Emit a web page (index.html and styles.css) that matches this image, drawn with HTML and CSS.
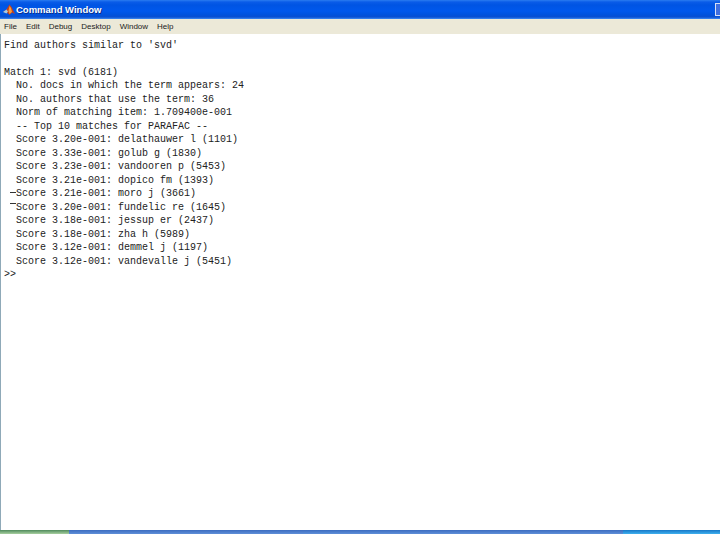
FILE: index.html
```html
<!DOCTYPE html>
<html lang="en">
<head>
<meta charset="utf-8">
<title>Command Window</title>
<link rel="stylesheet" href="styles.css">
</head>
<body>
<div class="window">
  <header class="titlebar">
    <svg class="app-icon" width="12" height="12" viewBox="0 0 12 12" aria-hidden="true">
      <path d="M0 8 L3.5 5.5 L6.5 0.5 L8.5 3 L12 10 L9 8.5 L6.5 11 L4 8.5 Z" fill="#c8401a"/>
      <path d="M0 8 L3.5 5.5 L5 7.5 L3.5 9.5 Z" fill="#a9cbe0"/>
      <path d="M6.5 2 L8 4 L9 8 L6.5 10 L5.5 7 Z" fill="#f0a040"/>
    </svg>
    <span class="title">Command Window</span>
    <span class="win-btn"></span>
  </header>
  <nav class="menubar">
    <span class="menu-item">File</span>
    <span class="menu-item">Edit</span>
    <span class="menu-item">Debug</span>
    <span class="menu-item">Desktop</span>
    <span class="menu-item">Window</span>
    <span class="menu-item">Help</span>
  </nav>
  <main class="console">
    <pre class="output">Find authors similar to 'svd'

Match 1: svd (6181)
  No. docs in which the term appears: 24
  No. authors that use the term: 36
  Norm of matching item: 1.709400e-001
  -- Top 10 matches for PARAFAC --
  Score 3.20e-001: delathauwer l (1101)
  Score 3.33e-001: golub g (1830)
  Score 3.23e-001: vandooren p (5453)
  Score 3.21e-001: dopico fm (1393)
  Score 3.21e-001: moro j (3661)
  Score 3.20e-001: fundelic re (1645)
  Score 3.18e-001: jessup er (2437)
  Score 3.18e-001: zha h (5989)
  Score 3.12e-001: demmel j (1197)
  Score 3.12e-001: vandevalle j (5451)
&gt;&gt;</pre>
    <span class="tick tick-a"></span>
    <span class="tick tick-b"></span>
  </main>
  <footer class="taskbar">
    <span class="task-start"></span>
    <span class="task-mid"></span>
    <span class="task-tray"></span>
  </footer>
  <div class="bottom-gap"></div>
</div>
</body>
</html>
```
FILE: styles.css
```css
html, body {
  margin: 0;
  padding: 0;
  background: #fff;
}
.window {
  width: 720px;
  height: 540px;
  display: flex;
  flex-direction: column;
  overflow: hidden;
}
.titlebar {
  height: 19px;
  flex: none;
  display: flex;
  align-items: center;
  padding-left: 3px;
  box-sizing: border-box;
  background: linear-gradient(#2b7cf0 0, #0a5ce8 2px, #0054e3 5px, #0058ec 11px, #0052dc 15px, #0a4fd0 17px, #3d8cf5 19px);
}
.app-icon {
  flex: none;
}
.title {
  margin-left: 1px;
  font: bold 9.5px/1 "Liberation Sans", sans-serif;
  color: #fff;
  text-shadow: 1px 1px 0 #0a2f8a;
}
.win-btn {
  margin-left: auto;
  width: 5px;
  height: 13px;
  box-sizing: border-box;
  border: 1px solid #d5e0f5;
  border-right: 0;
  background: #3f6fe0;
}
.menubar {
  height: 15px;
  flex: none;
  display: flex;
  align-items: center;
  padding-left: 4px;
  gap: 9px;
  background: #ece9d8;
  font: 8px/1 "Liberation Sans", sans-serif;
  color: #222;
}
.console {
  flex: 1;
  position: relative;
  background: #fff;
  border-left: 1px solid #8fa9b8;
  padding: 5px 0 0 3px;
}
.output {
  margin: 0;
  font: 10px/13.47px "Liberation Mono", monospace;
  color: #222;
}
.tick {
  position: absolute;
  left: 9px;
  width: 6px;
  height: 1px;
  background: #333;
}
.tick-a { top: 158px; }
.tick-b { top: 169px; }
.taskbar {
  height: 4px;
  flex: none;
  display: flex;
}
.task-start {
  width: 69px;
  background: linear-gradient(#4f8a5c, #a8d0a0);
}
.task-mid {
  flex: 1;
  background: linear-gradient(#3b6cc0, #5f8fd8);
}
.task-tray {
  width: 97px;
  background: linear-gradient(#1577c8, #3fb0ee);
}
.bottom-gap {
  height: 6px;
  flex: none;
  background: #fff;
}
```
